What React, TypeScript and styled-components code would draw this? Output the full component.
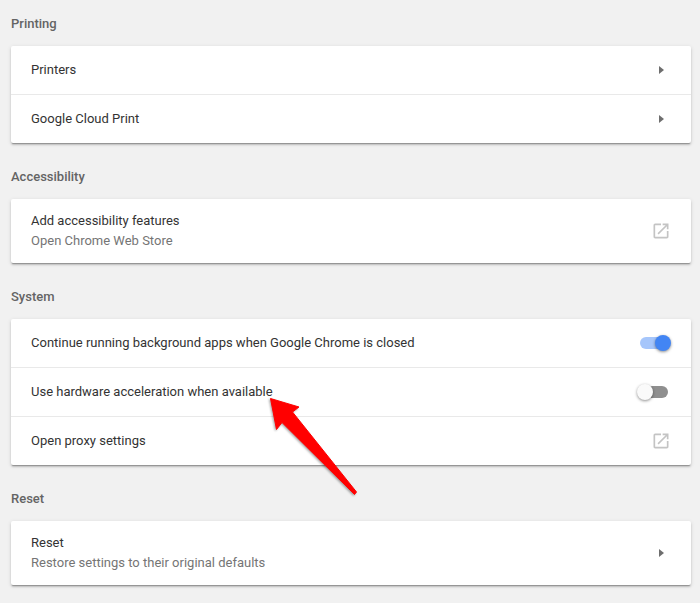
import React from 'react';
import styled, { createGlobalStyle } from 'styled-components';

const GlobalStyle = createGlobalStyle`
    html, body {
        margin: 0;
        padding: 0;
        background: #f1f1f1;
        overflow: hidden;
    }
`;

const Page = styled.div`
    position: relative;
    width: 700px;
    height: 603px;
    padding: 0 9px 0 11px;
    box-sizing: border-box;
    font-family: Roboto, 'Liberation Sans', sans-serif;
    font-size: 13px;
    color: #333;
`;

const Section = styled.section`
    & + & {
        margin-top: 10px;
    }
`;

const Heading = styled.h2`
    display: flex;
    align-items: center;
    height: 46px;
    margin: 0;
    font-size: 13px;
    font-weight: 500;
    color: #646464;
`;

const Card = styled.div`
    background: #fff;
    border-radius: 2px;
    box-shadow: 0 2px 2px 0 rgba(0, 0, 0, 0.14), 0 1px 4px 0 rgba(0, 0, 0, 0.12),
        0 2px 1px -1px rgba(0, 0, 0, 0.25);
`;

const Row = styled.div<{ $tall?: boolean }>`
    display: flex;
    align-items: center;
    justify-content: space-between;
    height: ${(p) => (p.$tall ? '64px' : '48px')};
    padding: 0 20px;

    & + & {
        border-top: 1px solid #e9e9e9;
    }
`;

const Labels = styled.div`
    display: flex;
    flex-direction: column;
    gap: 5px;
    margin-bottom: 2px;
    line-height: 15px;
`;

const SubLabel = styled.span`
    color: #757575;
`;

const IconSlot = styled.div`
    display: flex;
    align-items: center;
    justify-content: center;
    width: 20px;
    height: 20px;
`;

const Caret = styled.span`
    width: 0;
    height: 0;
    margin-left: 1px;
    border-left: 5px solid #6e6e6e;
    border-top: 4px solid transparent;
    border-bottom: 4px solid transparent;
`;

const Track = styled.div<{ $on?: boolean }>`
    position: relative;
    width: 28px;
    height: 12px;
    margin-right: 3px;
    border-radius: 6px;
    background: ${(p) => (p.$on ? '#a6c6fb' : '#8f8f8f')};
`;

const Knob = styled.span<{ $on?: boolean }>`
    position: absolute;
    top: -2px;
    left: ${(p) => (p.$on ? '15px' : '-3px')};
    width: 16px;
    height: 16px;
    border-radius: 50%;
    background: ${(p) => (p.$on ? '#4285f4' : '#fafafa')};
    box-shadow: 0 1px 3px rgba(0, 0, 0, 0.45);
`;

const ArrowOverlay = styled.svg`
    position: absolute;
    left: 0;
    top: 0;
    pointer-events: none;
    filter: drop-shadow(-1px 1px 1px rgba(0, 0, 0, 0.35));
`;

const CaretIcon = () => (
    <IconSlot>
        <Caret />
    </IconSlot>
);

const External = () => (
    <IconSlot>
        <svg width="20" height="20" viewBox="0 0 24 24" fill="#c4c4c4">
            <path d="M19 19H5V5h7V3H5c-1.11 0-2 .9-2 2v14c0 1.1.89 2 2 2h14c1.1 0 2-.9 2-2v-7h-2v7zM14 3v2h3.59l-9.83 9.83 1.41 1.41L19 6.41V10h2V3h-7z" />
        </svg>
    </IconSlot>
);

const Toggle = ({ on }: { on?: boolean }) => (
    <Track $on={on}>
        <Knob $on={on} />
    </Track>
);

export default function App() {
    return (
        <Page>
            <GlobalStyle />
            <Section>
                <Heading>Printing</Heading>
                <Card>
                    <Row>
                        <Labels>Printers</Labels>
                        <CaretIcon />
                    </Row>
                    <Row>
                        <Labels>Google Cloud Print</Labels>
                        <CaretIcon />
                    </Row>
                </Card>
            </Section>
            <Section>
                <Heading>Accessibility</Heading>
                <Card>
                    <Row $tall>
                        <Labels>
                            <span>Add accessibility features</span>
                            <SubLabel>Open Chrome Web Store</SubLabel>
                        </Labels>
                        <External />
                    </Row>
                </Card>
            </Section>
            <Section>
                <Heading>System</Heading>
                <Card>
                    <Row>
                        <Labels>Continue running background apps when Google Chrome is closed</Labels>
                        <Toggle on />
                    </Row>
                    <Row>
                        <Labels>Use hardware acceleration when available</Labels>
                        <Toggle />
                    </Row>
                    <Row>
                        <Labels>Open proxy settings</Labels>
                        <External />
                    </Row>
                </Card>
            </Section>
            <Section>
                <Heading>Reset</Heading>
                <Card>
                    <Row $tall>
                        <Labels>
                            <span>Reset</span>
                            <SubLabel>Restore settings to their original defaults</SubLabel>
                        </Labels>
                        <CaretIcon />
                    </Row>
                </Card>
            </Section>
            <ArrowOverlay width="700" height="603" viewBox="0 0 700 603">
                <path
                    d="M270.5 398.5 L299 407 L292.5 412 L356.5 492 L354.5 494.5 L282 422.5 L276.5 429.5 Z"
                    fill="#ff0000"
                    stroke="#ff0000"
                    strokeWidth="1"
                    strokeLinejoin="round"
                />
            </ArrowOverlay>
        </Page>
    );
}
